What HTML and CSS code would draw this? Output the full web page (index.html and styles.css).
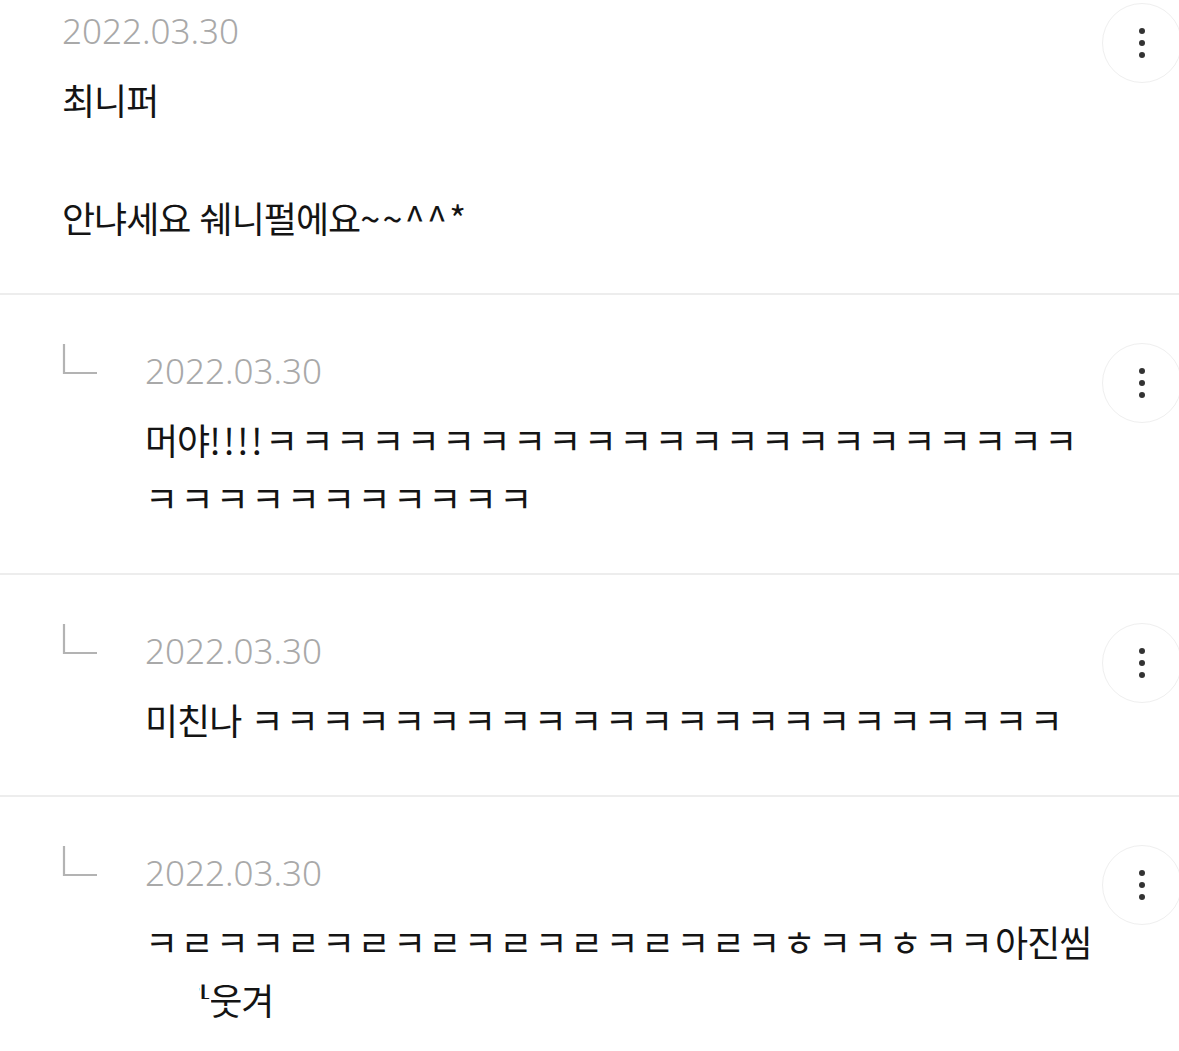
FILE: index.html
```html
<!DOCTYPE html>
<html lang="ko">
<head>
<meta charset="utf-8">
<title>댓글</title>
<link rel="stylesheet" href="styles.css">
</head>
<body>
<ul class="comments">
  <li class="comment first">
    <div class="body">
      <div class="date">2022.03.30</div>
      <p class="text">최니퍼<br><br>안냐세요 쉐니펄에요<span class="kk">~~^^*</span></p>
    </div>
    <button class="more" type="button" aria-label="더보기"><span></span><span></span><span></span></button>
  </li>
  <li class="comment reply">
    <svg class="reply-icon" viewBox="0 0 83 32" width="83" height="32"><path d="M2 1 V30 H35" fill="none" stroke="#b3b3b3" stroke-width="2.2"/></svg>
    <div class="body">
      <div class="date">2022.03.30</div>
      <p class="text">머야<span class="kk">!!!!ㅋㅋㅋㅋㅋㅋㅋㅋㅋㅋㅋㅋㅋㅋㅋㅋㅋㅋㅋㅋㅋㅋㅋㅋㅋㅋㅋㅋㅋㅋㅋㅋㅋㅋ</span></p>
    </div>
    <button class="more" type="button" aria-label="더보기"><span></span><span></span><span></span></button>
  </li>
  <li class="comment reply">
    <svg class="reply-icon" viewBox="0 0 83 32" width="83" height="32"><path d="M2 1 V30 H35" fill="none" stroke="#b3b3b3" stroke-width="2.2"/></svg>
    <div class="body">
      <div class="date">2022.03.30</div>
      <p class="text">미친나 <span class="kk">ㅋㅋㅋㅋㅋㅋㅋㅋㅋㅋㅋㅋㅋㅋㅋㅋㅋㅋㅋㅋㅋㅋㅋ</span></p>
    </div>
    <button class="more" type="button" aria-label="더보기"><span></span><span></span><span></span></button>
  </li>
  <li class="comment reply last">
    <svg class="reply-icon" viewBox="0 0 83 32" width="83" height="32"><path d="M2 1 V30 H35" fill="none" stroke="#b3b3b3" stroke-width="2.2"/></svg>
    <div class="body">
      <div class="date">2022.03.30</div>
      <p class="text"><span class="kk">ㅋㄹㅋㅋㄹㅋㄹㅋㄹㅋㄹㅋㄹㅋㄹㅋㄹㅋㅎㅋㅋㅎㅋㅋ</span>아진씸<span class="masked">진짜</span>웃겨</p>
    </div>
    <button class="more" type="button" aria-label="더보기"><span></span><span></span><span></span></button>
  </li>
</ul>
</body>
</html>
```
FILE: styles.css
```css
html, body {
  margin: 0;
  padding: 0;
  background: #ffffff;
}

body {
  font-family: "Noto Sans CJK KR", "Noto Sans", sans-serif;
  overflow-x: hidden;
}

.comments {
  list-style: none;
  margin: 0;
  padding: 0;
}

.comment {
  display: flex;
  align-items: flex-start;
  padding: 53px 0 47px 62px;
  border-bottom: 2px solid #ededed;
}

.comment.first {
  padding-top: 8px;
  padding-bottom: 46px;
}

.comment.last {
  border-bottom: none;
}

.reply-icon {
  flex: none;
  display: block;
  margin-top: -5px;
}

.body {
  flex: 1;
  min-width: 0;
}

.date {
  font-family: "Noto Sans", sans-serif;
  font-weight: 300;
  font-size: 35px;
  line-height: 46px;
  color: #a9a9a9;
}

.text {
  margin: 16px 0 0;
  font-size: 36px;
  letter-spacing: -1px;
  line-height: 58px;
  color: #141414;
  word-break: break-all;
}

.first .text {
  line-height: 59px;
}

.kk {
  letter-spacing: 2.3px;
}

.masked {
  position: relative;
}

.masked::after {
  content: "";
  position: absolute;
  left: -4px;
  top: 0;
  right: 10px;
  bottom: 0;
  background: #ffffff;
}

.masked::before {
  content: "";
  position: absolute;
  right: -2px;
  width: 14px;
  top: 26px;
  bottom: 0;
  background: #ffffff;
  z-index: 1;
}

.more {
  flex: none;
  width: 80px;
  height: 80px;
  margin: -5px -3px 0 2px;
  padding: 0;
  border-radius: 50%;
  border: 1.5px solid #efefef;
  background: #ffffff;
  display: flex;
  flex-direction: column;
  align-items: center;
  justify-content: center;
  gap: 6px;
}

.more span {
  width: 6px;
  height: 6px;
  border-radius: 50%;
  background: #333333;
}
```
